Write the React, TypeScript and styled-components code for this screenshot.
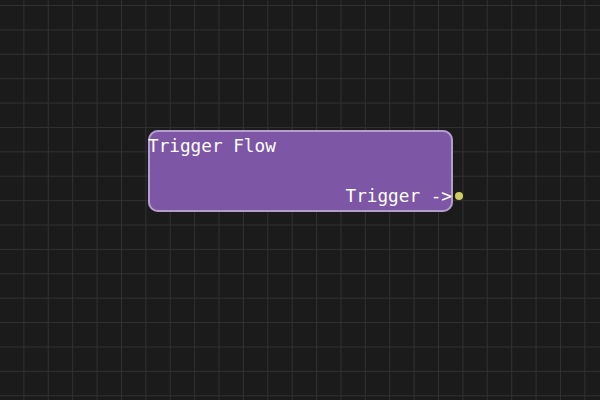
import React from "react";
import styled, { createGlobalStyle } from "styled-components";

const Global = createGlobalStyle`
  html, body { margin: 0; padding: 0; background: #1b1b1b; }
  #root { width: 600px; height: 400px; }
`;

const Canvas = styled.div`
  position: relative;
  width: 600px;
  height: 400px;
  overflow: hidden;
  background-color: #1b1b1b;
  background-image:
    linear-gradient(to right, #313131 1px, transparent 1px),
    linear-gradient(to bottom, #313131 1px, transparent 1px);
  background-size: 24.4px 24.4px;
  background-position: -1px 5px;
`;

const Node = styled.div<{ $x: number; $y: number }>`
  position: absolute;
  left: ${(p) => p.$x}px;
  top: ${(p) => p.$y}px;
  width: 305px;
  height: 82px;
  box-sizing: border-box;
  border-radius: 10px;
  background: #7d56a6;
  box-shadow: inset 0 0 0 2px #b49ecb;
  display: flex;
  flex-direction: column;
  justify-content: space-between;
  font-family: "DejaVu Sans Mono", monospace;
  font-size: 17.7px;
  color: #ffffff;
`;

const Title = styled.div`
  line-height: 20px;
  margin-top: 6px;
  white-space: pre;
`;

const OutputRow = styled.div`
  position: relative;
  display: flex;
  justify-content: flex-end;
  line-height: 20px;
  margin-bottom: 6px;
  padding-right: 1px;
  white-space: pre;
`;

const Port = styled.span`
  position: absolute;
  right: -10px;
  top: 6px;
  width: 8px;
  height: 8px;
  border-radius: 50%;
  background: #cdcd62;
`;

export default function App() {
  return (
    <>
      <Global />
      <Canvas>
        <Node $x={148} $y={130}>
          <Title>Trigger Flow</Title>
          <OutputRow>
            Trigger -&gt;
            <Port />
          </OutputRow>
        </Node>
      </Canvas>
    </>
  );
}
